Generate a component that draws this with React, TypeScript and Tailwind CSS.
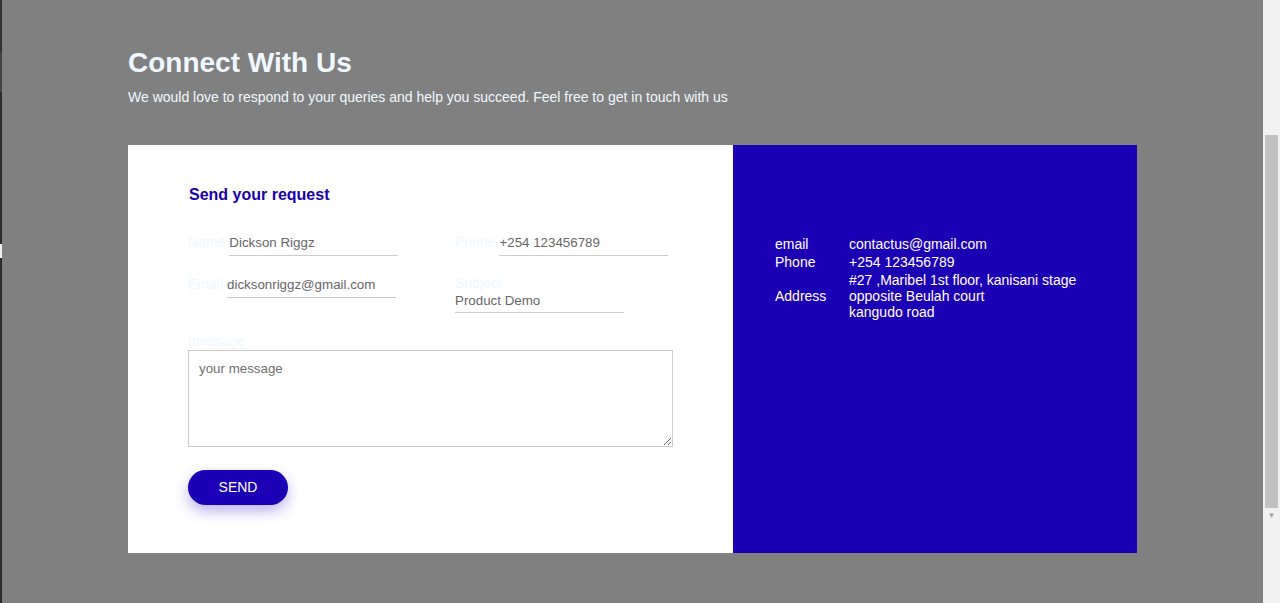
import React from 'react';

const BLUE = 'bg-[#1c00b5]';

function Field({ label, value }: { label: string; value: string }) {
  return (
    <div className="flex items-end">
      <label className="text-[14px] leading-[16px] text-[#f0f8ff] pb-[6px] mr-[4px]">{label}</label>
      <input
        readOnly
        value={value}
        className="w-[169px] h-[23px] border-0 border-b border-[#cccccc] outline-none text-[13.33px] text-[#666] bg-transparent pb-[3px]"
      />
    </div>
  );
}

function InfoTable() {
  return (
    <table className="text-[14px] leading-[16px] text-white border-separate border-spacing-0">
      <tbody>
        <tr>
          <td className="p-[1px] w-[74px] align-middle">email</td>
          <td className="p-[1px]">contactus@gmail.com</td>
        </tr>
        <tr>
          <td className="p-[1px] align-middle">Phone</td>
          <td className="p-[1px]">+254 123456789</td>
        </tr>
        <tr>
          <td className="p-[1px] align-middle">Address</td>
          <td className="p-[1px]">
            #27 ,Maribel 1st floor, kanisani stage
            <br />
            opposite Beulah court
            <br />
            kangudo road
          </td>
        </tr>
      </tbody>
    </table>
  );
}

export default function App() {
  return (
    <div className="flex h-[603px] w-[1280px] overflow-hidden bg-[#808080] font-['Liberation_Sans',Arial,sans-serif]">
      {/* left edge strip */}
      <div className="w-[2px] shrink-0 bg-[#2b2b2b] flex flex-col">
        <div className="h-[52px] bg-[#333]" />
        <div className="h-[40px] bg-[#444]" />
        <div className="h-[152px]" />
        <div className="h-[14px] bg-[#f0f0f0]" />
      </div>

      <div className="flex-1 flex flex-col">
        <div className="w-[1009px] ml-[126px] pt-[47px]">
          <h1 className="text-[28px] leading-[32px] font-bold text-[#f0f8ff]">Connect With Us</h1>
          <p className="mt-[10px] text-[14px] leading-[16px] text-[#f0f8ff]">
            We would love to respond to your queries and help you succeed. Feel free to get in touch with us
          </p>

          <div className="mt-[40px] flex h-[408px]">
            {/* form side */}
            <div className="w-[605px] bg-white pl-[60px] pt-[41px]">
              <h2 className="text-[16px] leading-[18px] font-bold text-[#1a00a8] ml-[1px]">Send your request</h2>

              <div className="mt-[29px] grid grid-cols-[267px_1fr] items-start gap-y-[19px]">
                <Field label="Name" value="Dickson Riggz" />
                <Field label="Phone" value="+254 123456789" />
                <Field label="Email" value="dicksonriggz@gmail.com" />
                <div className="flex flex-col">
                  <label className="text-[14px] leading-[16px] text-[#f0f8ff]">Subject</label>
                  <input
                    readOnly
                    value="Product Demo"
                    className="w-[169px] h-[22px] border-0 border-b border-[#cccccc] outline-none text-[13.33px] text-[#666] bg-transparent pb-[3px]"
                  />
                </div>
              </div>

              <div className="mt-[20px] flex flex-col">
                <label className="text-[14px] leading-[16px] text-[#f0f8ff] mb-[1px]">message</label>
                <textarea
                  readOnly
                  placeholder="your message"
                  className="w-[485px] h-[97px] border border-[#cccccc] outline-none px-[10px] py-[10px] text-[13.33px] leading-[16px] text-[#666] placeholder:text-[#6f6f6f]"
                />
              </div>

              <button className={`mt-[23px] w-[100px] h-[35px] rounded-full ${BLUE} text-white text-[14px] shadow-[0_6px_14px_rgba(60,30,220,0.35)]`}>
                SEND
              </button>
            </div>

            {/* info side */}
            <div className={`flex-1 ${BLUE} pl-[41px] pt-[90px]`}>
              <InfoTable />
            </div>
          </div>
        </div>
      </div>

      {/* scrollbar */}
      <div className="w-[17px] shrink-0 bg-[#f1f1f1] flex flex-col items-center">
        <div className="h-[135px]" />
        <div className="w-[13px] h-[373px] bg-[#c1c1c1]" />
        <div className="mt-[4px] text-[#a3a3a3] text-[8px] leading-[8px]">▼</div>
      </div>
    </div>
  );
}
